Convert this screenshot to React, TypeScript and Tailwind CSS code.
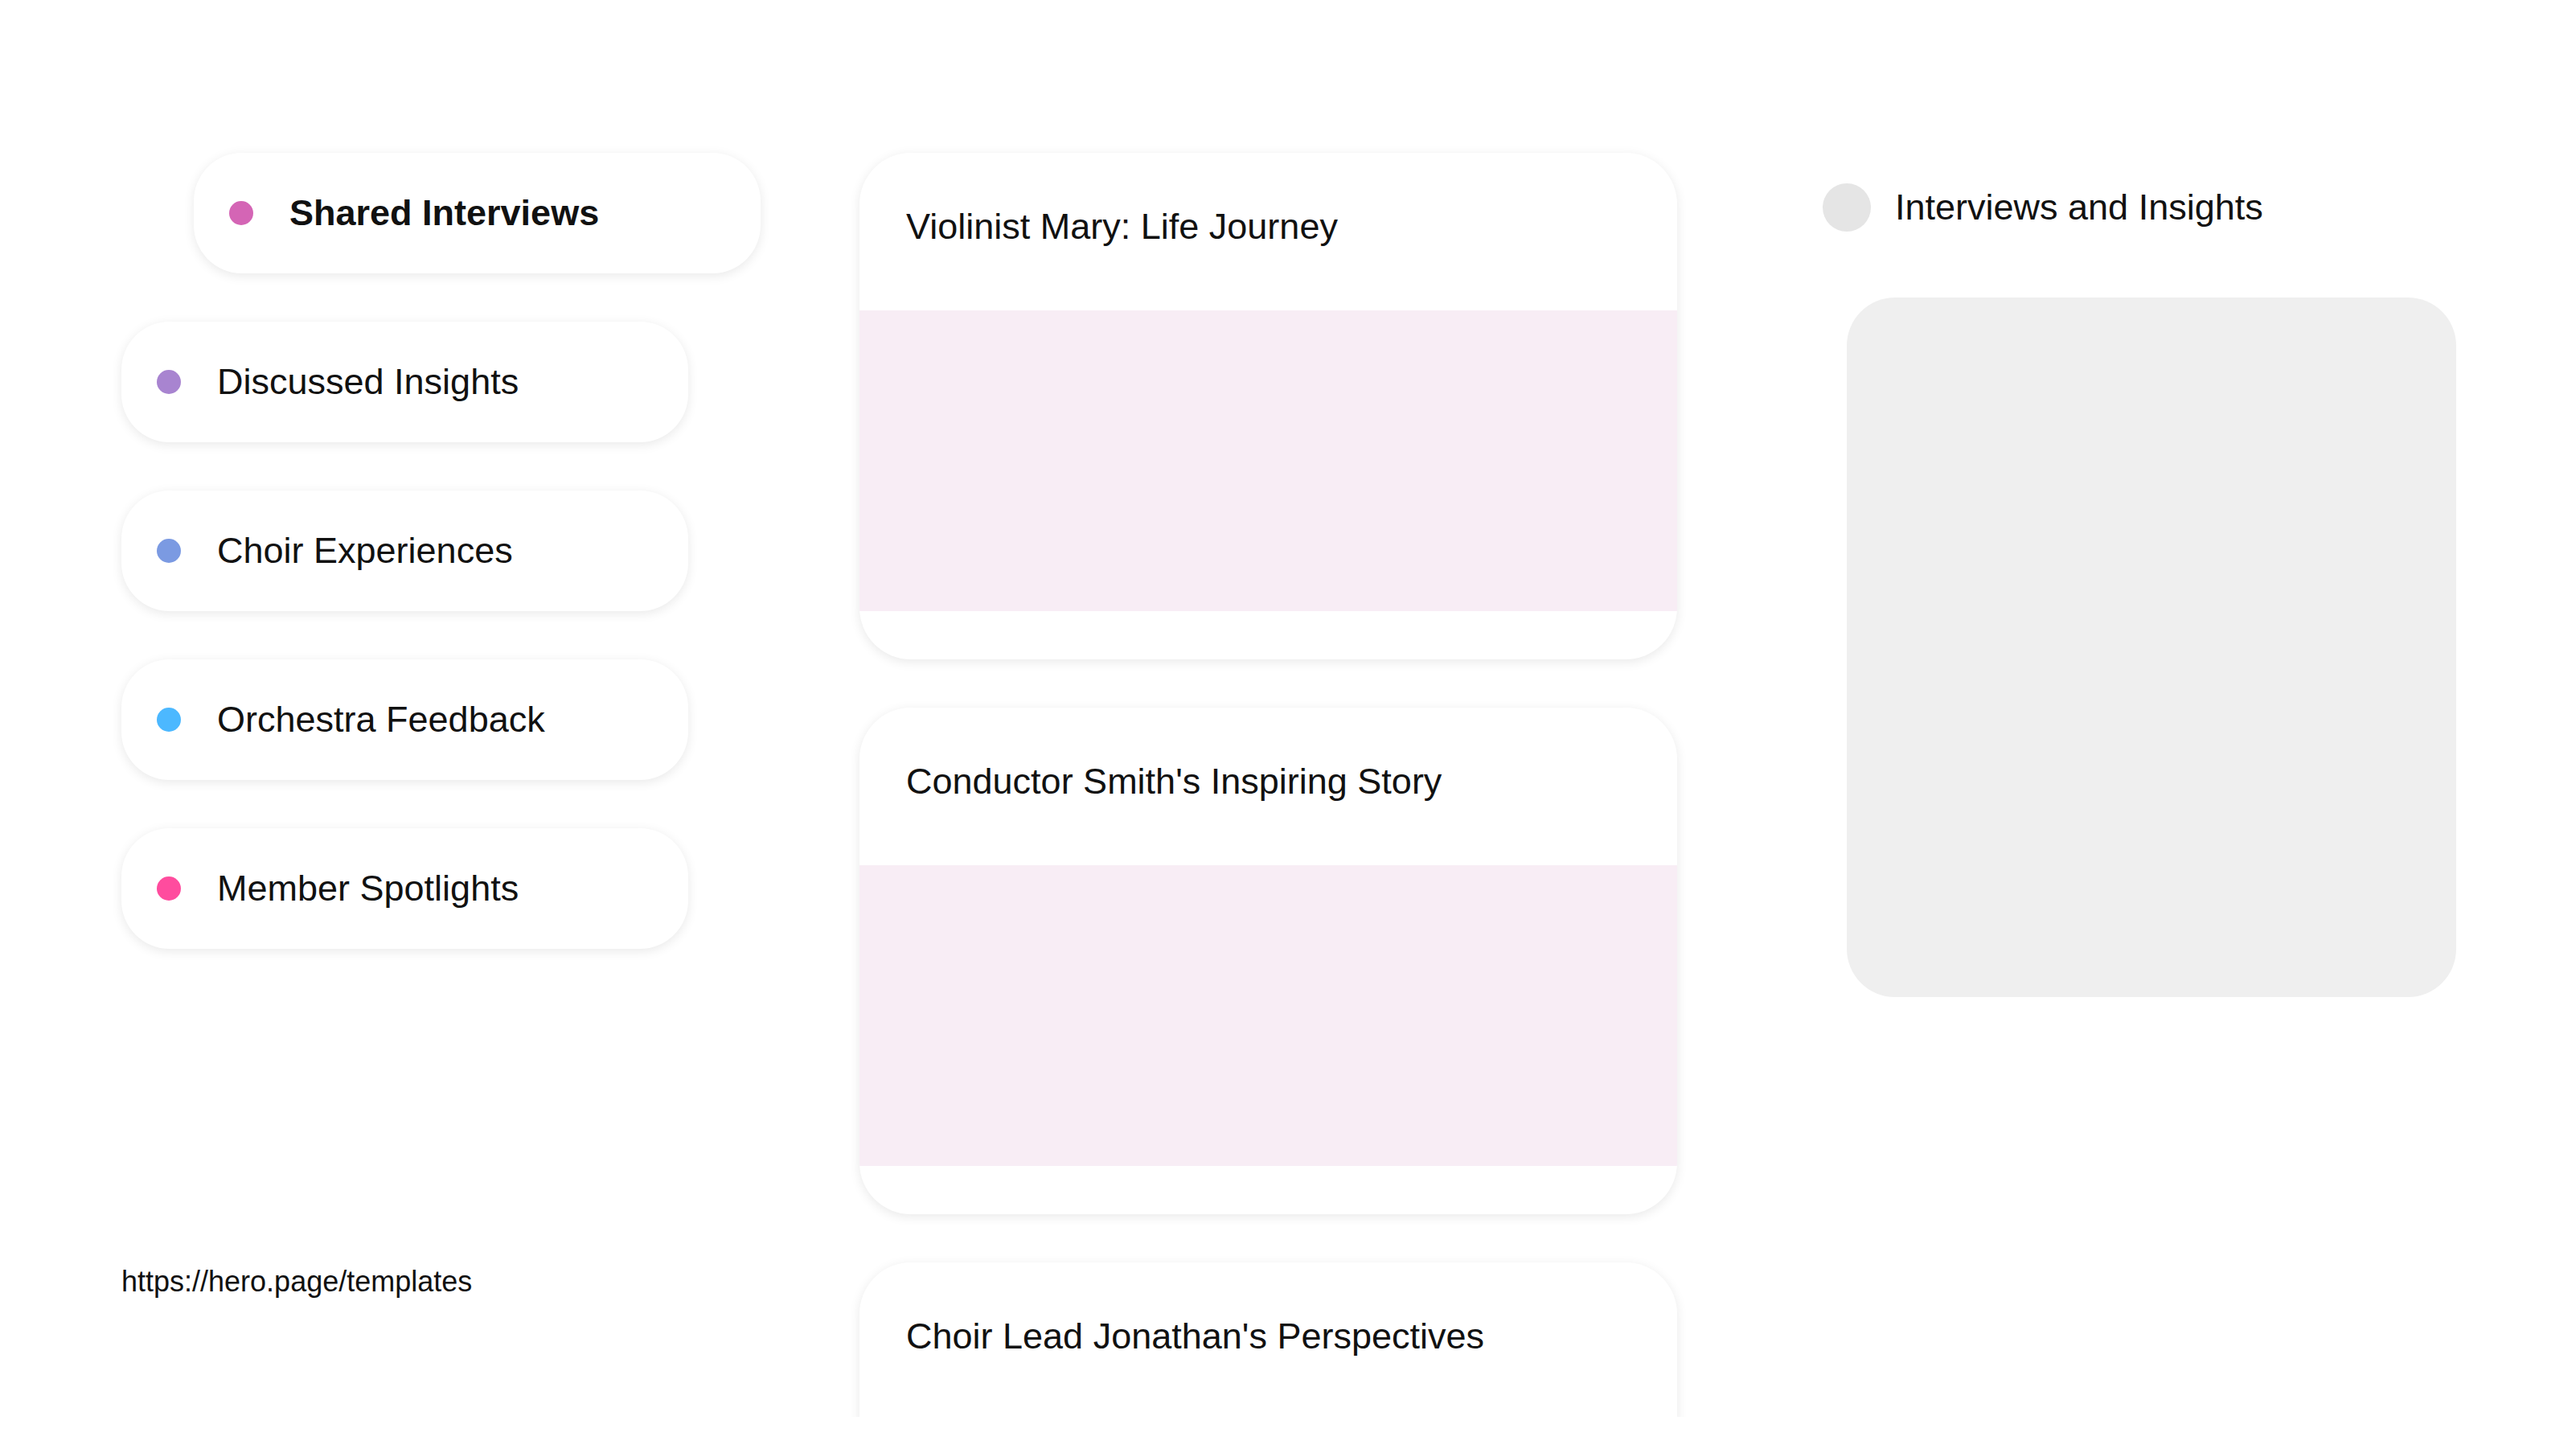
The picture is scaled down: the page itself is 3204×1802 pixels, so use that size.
const topics = [
  { label: 'Discussed Insights', dot: 'bg-[#a884d0]' },
  { label: 'Choir Experiences', dot: 'bg-[#7b9ae2]' },
  { label: 'Orchestra Feedback', dot: 'bg-[#4cb8ff]' },
  { label: 'Member Spotlights', dot: 'bg-[#ff4c9e]' },
];

const stories = [
  "Violinist Mary: Life Journey",
  "Conductor Smith's Inspiring Story",
  "Choir Lead Jonathan's Perspectives",
];

function Pill({ label, dot, active }: { label: string; dot: string; active?: boolean }) {
  return (
    <div className="flex h-[150px] w-[705px] items-center gap-[45px] rounded-[60px] bg-white pl-[44px] shadow-[0_3px_14px_rgba(0,0,0,0.09)]">
      <span className={`h-[30px] w-[30px] shrink-0 rounded-full ${dot}`} />
      <span className={`text-[45px] leading-[52px] text-[#111] ${active ? 'font-bold' : ''}`}>{label}</span>
    </div>
  );
}

function StoryCard({ title }: { title: string }) {
  return (
    <div className="flex h-[630px] w-[1017px] shrink-0 flex-col overflow-hidden rounded-[64px] bg-white shadow-[0_3px_14px_rgba(0,0,0,0.09)]">
      <div className="h-[196px] px-[58px] pt-[66px] text-[45px] leading-[52px] text-[#111]">{title}</div>
      <div className="h-[374px] bg-[#f8edf5]" />
    </div>
  );
}

export default function App() {
  return (
    <div className="flex h-[1802px] w-[3204px] overflow-hidden bg-white font-['Liberation_Sans',Arial,sans-serif]">
      <aside className="ml-[151px] flex w-[795px] shrink-0 flex-col gap-[60px] pt-[190px]">
        <div className="ml-[90px]">
          <Pill label="Shared Interviews" dot="bg-[#d465b5]" active />
        </div>
        {topics.map((t) => (
          <Pill key={t.label} label={t.label} dot={t.dot} />
        ))}
        <div className="mt-[333px] text-[36px] leading-[41px] text-[#111]">https://hero.page/templates</div>
      </aside>

      <main className="ml-[93px] flex h-[1762px] w-[1077px] shrink-0 flex-col gap-[60px] overflow-hidden px-[30px] pt-[190px]">
        {stories.map((s) => (
          <StoryCard key={s} title={s} />
        ))}
      </main>

      <section className="ml-[151px] flex w-[788px] shrink-0 flex-col pt-[228px]">
        <div className="flex h-[60px] items-center gap-[30px]">
          <span className="h-[60px] w-[60px] rounded-full bg-[#e5e5e5]" />
          <span className="text-[45px] leading-[52px] text-[#111]">Interviews and Insights</span>
        </div>
        <div className="ml-[30px] mt-[82px] h-[870px] w-[758px] rounded-[60px] bg-[#efefef]" />
      </section>
    </div>
  );
}
